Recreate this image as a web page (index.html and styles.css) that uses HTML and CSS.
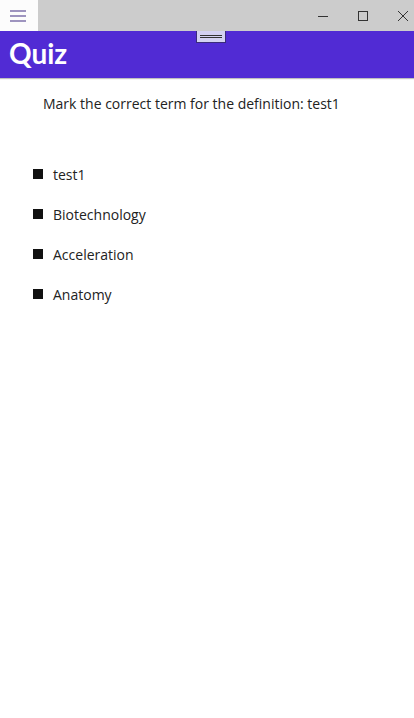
FILE: index.html
```html
<!DOCTYPE html>
<html>
<head>
<meta charset="utf-8">
<link rel="stylesheet" href="styles.css">
</head>
<body>
<div class="titlebar">
  <div class="menu-btn">
    <svg width="16" height="12" viewBox="0 0 16 12"><g stroke="#5f4f96" stroke-width="1.2"><line x1="0" y1="1" x2="16" y2="1"/><line x1="0" y1="6" x2="16" y2="6"/><line x1="0" y1="11" x2="16" y2="11"/></g></svg>
  </div>
  <div class="drag"></div>
  <div class="controls">
    <div class="ctl"><svg width="12" height="12" viewBox="0 0 12 12"><line x1="1" y1="6.5" x2="11" y2="6.5" stroke="#333" stroke-width="1"/></svg></div>
    <div class="ctl"><svg width="12" height="12" viewBox="0 0 12 12"><rect x="1.5" y="1.5" width="9" height="9" fill="none" stroke="#333" stroke-width="1"/></svg></div>
    <div class="ctl"><svg width="12" height="12" viewBox="0 0 12 12"><path d="M1 1L11 11M11 1L1 11" stroke="#333" stroke-width="1"/></svg></div>
  </div>
</div>
<header class="header">
  <h1 class="title">Quiz</h1>
  <div class="handle"><span></span><span></span></div>
</header>
<main class="content">
  <p class="question">Mark the correct term for the definition: test1</p>
  <ul class="answers">
    <li>test1</li>
    <li>Biotechnology</li>
    <li>Acceleration</li>
    <li>Anatomy</li>
  </ul>
</main>
</body>
</html>
```
FILE: styles.css
```css
html, body { margin: 0; padding: 0; background: #fff; }
body { font-family: "Open Sans", sans-serif; width: 414px; height: 718px; overflow: hidden; }
.titlebar { display: flex; height: 31px; background: #cccccc; }
.menu-btn { width: 38px; background: #fcfcfc; display: flex; align-items: center; justify-content: center; padding-right: 2px; box-sizing: border-box; }
.drag { flex: 1; }
.controls { display: flex; }
.ctl { width: 40px; box-sizing: border-box; padding-right: 5px; display: flex; align-items: center; justify-content: flex-end; }
.header { position: relative; height: 47px; background: #512bd4; box-shadow: 0 1px 1px rgba(0,0,0,0.25); display: flex; align-items: center; }
.title { margin: 0 0 0 9px; font-family: Lato, sans-serif; font-weight: 700; font-size: 28px; color: #fff; line-height: 1; padding-bottom: 4px; }
.handle { position: absolute; left: 196px; top: 0; width: 28px; height: 11px; background: #d3d1f2; border: 1px solid #3a2c7a; border-top: none; box-sizing: content-box; display: flex; flex-direction: column; align-items: center; justify-content: center; gap: 1px; }
.handle span { display: block; width: 22px; height: 1px; background: #333; }
.content { padding: 16px 0 0 0; }
.question { margin: 0 0 0 43px; font-size: 14px; color: #222; line-height: 20px; }
.answers { list-style: none; margin: 50px 0 0 0; padding: 0 0 0 33px; }
.answers li { display: flex; align-items: center; height: 20px; margin-bottom: 20px; font-size: 14px; color: #222; }
.answers li::before { content: ""; width: 10px; height: 10px; background: #111; margin-right: 10px; }
```
